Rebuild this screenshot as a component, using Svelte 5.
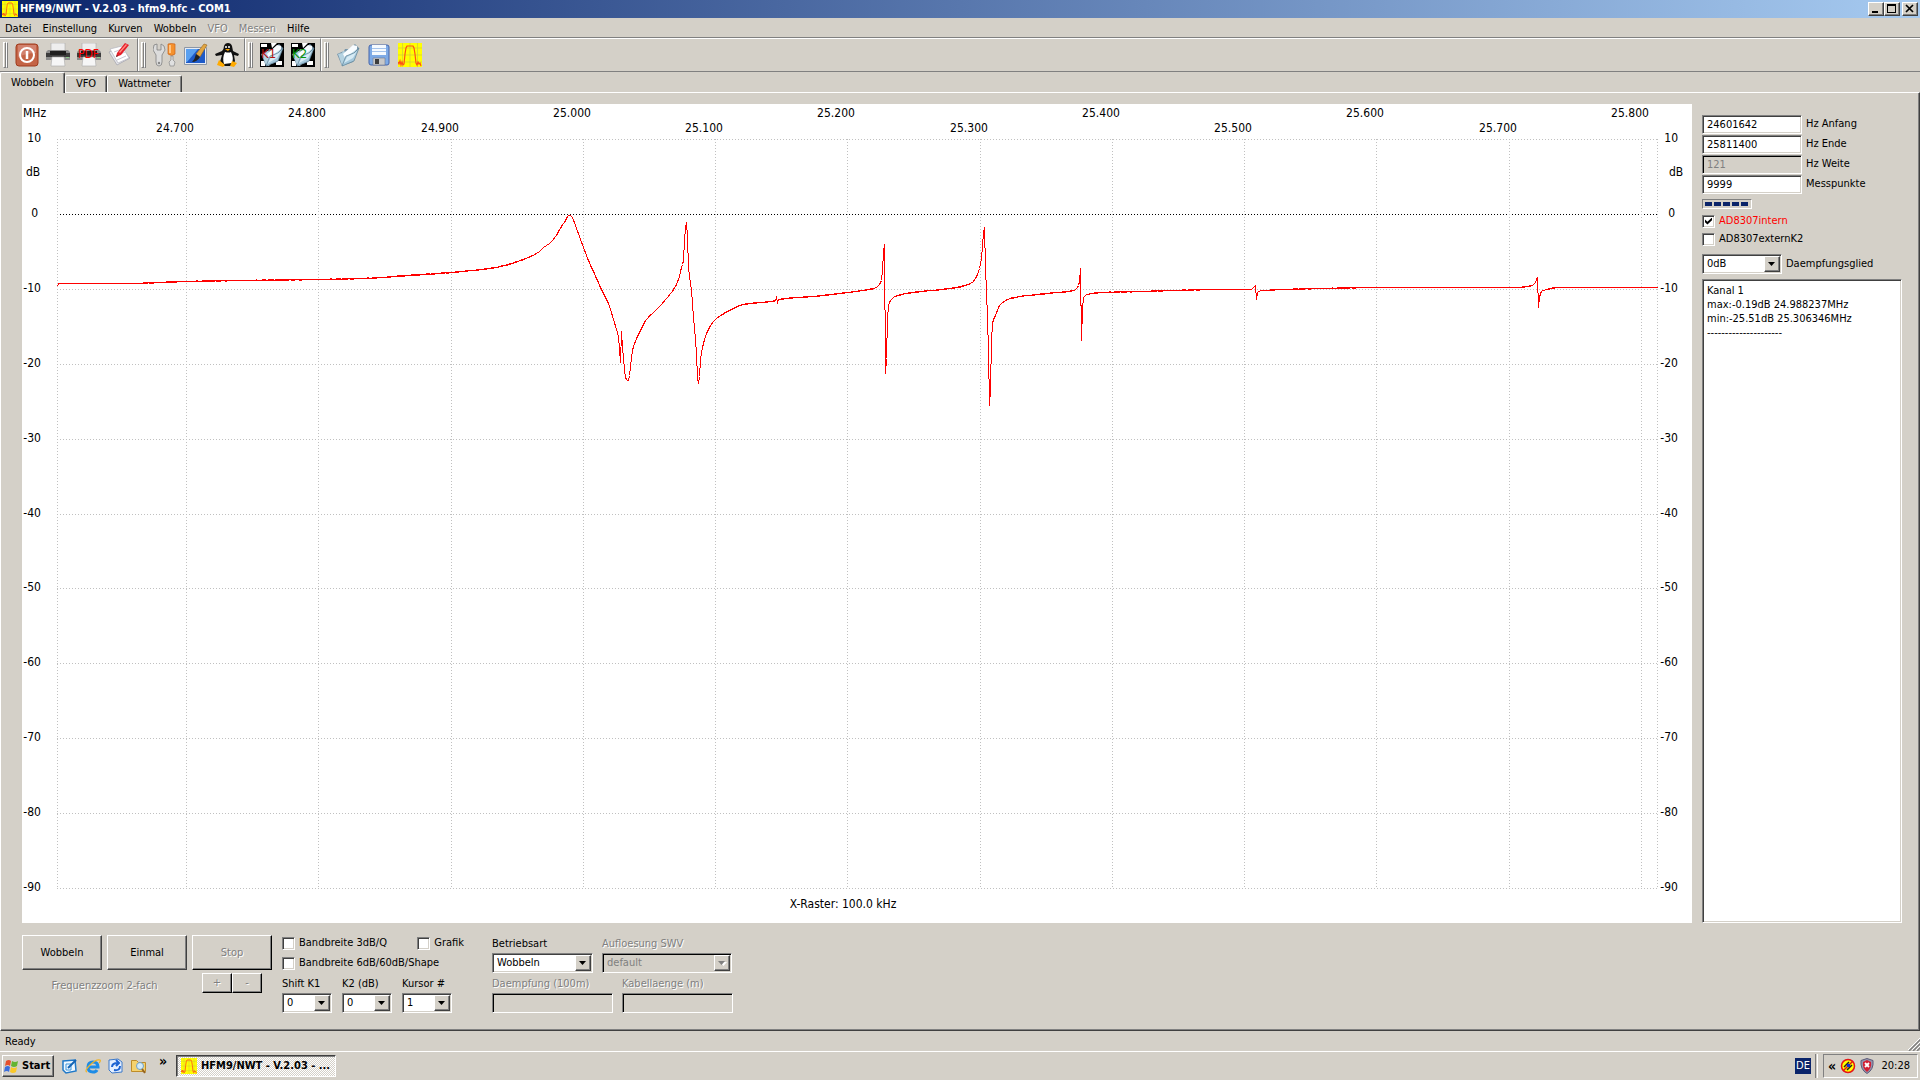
<style>
:global(body) {
  margin: 0;
  background: #d4d0c8;
}

.window {
  display: flex;
  flex-direction: column;
  min-height: 100vh;
  background: #d4d0c8;
  color: #000;
  font-family: 'DejaVu Sans Condensed', 'DejaVu Sans', sans-serif;
  font-size: 11px;
  line-height: 14px;
  cursor: default;
}

svg {
  display: block;
  flex: none;
}

button,
input,
select {
  box-sizing: border-box;
  margin: 0;
  padding: 0;
  border: 0;
  border-radius: 0;
  background: #d4d0c8;
  color: inherit;
  font: inherit;
}

/* classic edges */
.raised {
  border: 1px solid;
  border-color: #fff #404040 #404040 #fff;
  box-shadow: inset -1px -1px #808080;
}

.raised:disabled {
  border-color: #fff #000 #000 #fff;
}

.sunken {
  border: 1px solid;
  border-color: #808080 #fff #fff #808080;
  box-shadow: inset 1px 1px #404040, inset -1px -1px #d4d0c8;
  background: #fff;
}

.sunken:disabled {
  background: #d4d0c8;
  box-shadow: inset 1px 1px #000;
}

.off,
button:disabled,
input:disabled,
select:disabled {
  color: #808080;
  opacity: 1;
}

.off,
button:disabled {
  text-shadow: 1px 1px #fff;
}

/* title bar */
.title-bar {
  display: flex;
  align-items: center;
  gap: 2px;
  height: 18px;
  padding: 0 2px;
  background: linear-gradient(to right, #0a246a, #a6caf0);
  color: #fff;
}

.title-bar h1 {
  flex: 1;
  margin: 0;
  font-size: 11px;
  font-weight: 700;
}

.caption-buttons {
  display: flex;
}

.caption-buttons button {
  width: 16px;
  height: 14px;
  padding: 0 2px;
}

.caption-buttons button:last-child {
  margin-left: 2px;
}

/* menu */
.menu {
  display: flex;
  align-items: center;
  gap: 11px;
  box-sizing: border-box;
  height: 19px;
  padding: 2px 5px 0;
}

.menu a {
  color: inherit;
  text-decoration: none;
}

.menu a.off {
  color: #808080;
}

/* tool bar */
.toolbars {
  display: flex;
  box-sizing: border-box;
  height: 35px;
  border-top: 1px solid #808080;
  border-bottom: 1px solid #808080;
}

.toolbar {
  display: flex;
  align-items: center;
  gap: 7px;
  padding: 0 5px 0 2px;
  border-top: 1px solid #fff;
  border-left: 1px solid #fff;
  border-right: 1px solid #808080;
}

.toolbar:first-child {
  border-left: 0;
  padding-left: 3px;
}

.toolbar:last-child {
  flex: 1;
  border-right: 0;
}

.handle {
  display: flex;
  width: 5px;
  height: 26px;
}

.handle::before,
.handle::after {
  content: '';
  flex: 1;
  border: 1px solid;
  border-color: #fff #808080 #808080 #fff;
}

.toolbar button {
  width: 24px;
  height: 24px;
}

/* tabs */
.tabs {
  display: flex;
  align-items: flex-end;
  height: 20px;
}

.tabs button {
  height: 17px;
  padding: 0 10px;
  border: 1px solid;
  border-color: #fff #404040 transparent #fff;
  border-bottom: 0;
  border-radius: 2px 2px 0 0;
  box-shadow: inset -1px 0 #808080;
}

.tabs button.active {
  position: relative;
  height: 21px;
  margin-bottom: -1px;
  padding: 0 10px 1px;
}

.pane {
  flex: 1;
  border: 1px solid;
  border-color: #fff #404040 #404040 #fff;
  box-shadow: inset -1px -1px #808080;
  padding: 11px 17px 16px 21px;
}

.work {
  display: grid;
  grid-template-columns: minmax(0, 1fr) 200px;
  gap: 10px;
}

.chart {
  width: 100%;
  height: auto;
  background: #fff;
  font-size: 12px;
}

.grid {
  stroke: #c0c0c0;
  stroke-dasharray: 1 2;
  shape-rendering: crispEdges;
}

.zero {
  stroke: #000;
}

.trace {
  fill: none;
  stroke: #f00;
  shape-rendering: crispEdges;
}

/* side panel */
.side {
  display: flex;
  flex-direction: column;
  padding-top: 10px;
}

.field {
  display: grid;
  grid-template-columns: 100px 1fr;
  align-items: center;
  gap: 4px;
  height: 20px;
}

.field input {
  width: 100px;
  height: 19px;
  padding: 0 4px;
}

.progress {
  display: flex;
  gap: 2px;
  width: 50px;
  height: 10px;
  box-sizing: border-box;
  margin: 5px 0 3px;
  padding: 2px;
  border: 1px solid;
  border-color: #808080 #fff #fff #808080;
}

.progress i {
  width: 7px;
  background: #0a246a;
}

.check {
  display: flex;
  align-items: center;
  gap: 4px;
  height: 18px;
}

.check input {
  appearance: none;
  display: grid;
  place-items: center;
  width: 13px;
  height: 13px;
}

.check input:checked::before {
  content: '';
  width: 7px;
  height: 7px;
  background: #000;
  clip-path: polygon(0 30%, 35% 62%, 100% 0, 100% 40%, 35% 100%, 0 68%);
}

.red {
  color: #f00;
}

.combo {
  position: relative;
  display: block;
  height: 20px;
}

.combo select {
  appearance: none;
  width: 100%;
  height: 20px;
  padding: 0 4px;
}

.combo :global(svg) {
  position: absolute;
  top: 2px;
  right: 2px;
  box-sizing: border-box;
  width: 16px;
  height: 16px;
  background: #d4d0c8;
  pointer-events: none;
}

.damping {
  display: grid;
  grid-template-columns: 80px 1fr;
  align-items: center;
  gap: 4px;
  margin: 6px 0 5px;
}

.log {
  flex: 1;
  padding: 4px;
}

.log p {
  margin: 0;
}

/* controls under the chart */
.controls {
  display: flex;
  gap: 10px;
  margin-top: 12px;
}

.run {
  display: grid;
  grid-template-columns: repeat(3, 80px);
  gap: 3px 5px;
  align-content: start;
}

.run button {
  height: 35px;
}

.run .zoom-label {
  grid-column: span 2;
  align-self: end;
  text-align: center;
}

.run .zoom {
  display: flex;
  justify-content: center;
}

.run .zoom button {
  width: 30px;
  height: 20px;
}

.options {
  width: 200px;
}

.options .row {
  display: flex;
  justify-content: space-between;
  height: 20px;
  padding-right: 18px;
}

.options .row .check {
  height: 16px;
}

.shifts {
  display: flex;
  gap: 10px;
}

.shifts label {
  width: 50px;
  white-space: nowrap;
}

.stack {
  display: block;
}

.stack > span:first-child {
  display: block;
  height: 18px;
  line-height: 17px;
}

.modes {
  display: flex;
  flex-direction: column;
  gap: 2px;
}

.modes div {
  display: flex;
  gap: 9px;
}

.stack input {
  display: block;
  width: 100%;
  height: 20px;
}

.w101 {
  width: 101px;
}

.w111 {
  width: 111px;
}

.w121 {
  width: 121px;
}

.w130 {
  width: 130px;
}

/* bottom bars */
.status {
  display: flex;
  align-items: center;
  justify-content: space-between;
  box-sizing: border-box;
  height: 20px;
  padding: 2px 0 0 5px;
}

.status svg {
  align-self: flex-end;
}

.taskbar {
  display: flex;
  align-items: center;
  box-sizing: border-box;
  height: 29px;
  padding: 2px 2px 3px;
  border-top: 1px solid #fff;
}

.start,
.task {
  display: flex;
  align-items: center;
  height: 22px;
  font-weight: 700;
}

.start {
  gap: 2px;
  width: 52px;
  padding: 0 1px;
}

.quick {
  display: flex;
  align-items: center;
  gap: 7px;
  margin: 0 4px 0 8px;
}

.quick a {
  display: block;
}

.more {
  display: flex;
  align-items: flex-start;
  width: 25px;
  height: 22px;
  padding-left: 8px;
  font-size: 14px;
  font-weight: 700;
  line-height: 12px;
}

.task {
  gap: 4px;
  width: 160px;
  padding-left: 4px;
  background: repeating-conic-gradient(#fff 0 25%, #d4d0c8 0 50%) 0 0 / 2px 2px;
  border: 1px solid;
  border-color: #404040 #fff #fff #404040;
  box-shadow: inset 1px 1px #808080;
}

.lang {
  width: 16px;
  height: 16px;
  margin-left: auto;
  background: #0a246a;
  color: #fff;
  line-height: 16px;
  text-align: center;
}

.divider {
  width: 1px;
  height: 24px;
  margin: 0 5px 0 4px;
  border-left: 1px solid #808080;
  border-right: 1px solid #fff;
}

.tray {
  display: flex;
  align-items: center;
  gap: 4px;
  box-sizing: border-box;
  width: 95px;
  height: 24px;
  padding: 0 7px 0 4px;
  border: 1px solid;
  border-color: #808080 #fff #fff #808080;
}

.tray b {
  font-size: 14px;
}

.tray time {
  margin-left: auto;
}
</style>

<script>
const menu = [
  { name: 'Datei' },
  { name: 'Einstellung' },
  { name: 'Kurven' },
  { name: 'Wobbeln' },
  { name: 'VFO', off: true },
  { name: 'Messen', off: true },
  { name: 'Hilfe' },
];

const tabs = ['Wobbeln', 'VFO', 'Wattmeter'];
let tab = $state('Wobbeln');

let sweep = $state([
  { id: 'start', label: 'Hz Anfang', value: '24601642' },
  { id: 'stop', label: 'Hz Ende', value: '25811400' },
  { id: 'step', label: 'Hz Weite', value: '121', off: true },
  { id: 'points', label: 'Messpunkte', value: '9999' },
]);

const shifts = [
  { label: 'Shift K1', value: '0' },
  { label: 'K2 (dB)', value: '0' },
  { label: 'Kursor #', value: '1' },
];

// plot area inside the 1670 x 819 drawing
const left = 35;
const right = 1635;
const top = 35;
const levels = [10, 0, -10, -20, -30, -40, -50, -60, -70, -80, -90];
const levelY = (db) => top + Math.round((10 - db) * 7.49);

const freqs = Array.from({ length: 12 }, (_, i) => ({
  x: Math.round(164 + i * 132.27),
  y: i % 2 ? 13 : 28,
  text: (24.7 + i / 10).toFixed(3),
}));

const samples = [
  '35,182 36,179 101,179 164,177 218,176 295,175 340,174 385,171 429,168 458,165 478,162',
  '498,156 514,149 521,143 528,138 533,132 539,122 543,116 545,112 547,111 549,112 554,124',
  '561,143 566,156 571,167 579,185 586,199 591,215 594,225 596,233 597,244 598,258 599,227 600,243',
  '601,253 603,273 606,276 608,262 610,246 616,230 624,215 633,206 644,194 651,185 656,175',
  '659,163 661,156 662,136 664,118 665,133 666,163 669,186 671,213 674,249 675,273 676,279',
  '677,272 678,256 680,243 683,232 688,221 694,214 711,204 721,200 738,198 753,196 754,193 755,198 756,195',
  '790,192 818,189 834,187 851,184 856,181 859,176 860,166 861,148 862,140 863,269 864,254',
  '865,214 866,201 869,195 873,192 884,189 918,185 934,183 948,179 953,174 957,164 959,154',
  '960,142 961,128 962,123 963,162 964,188 965,213 966,247 967,301 968,285 969,236 970,219',
  '973,211 978,200 988,194 1005,191 1025,189 1051,186 1055,183 1057,177 1058,164 1059,236',
  '1060,204 1061,193 1065,190 1081,188 1118,187 1150,186 1200,185 1228,185 1231,183 1233,181',
  '1234,195 1235,188 1240,186 1300,184 1360,183 1490,183 1510,181 1513,178 1515,173 1516,203',
  '1517,193 1519,187 1525,185 1535,183 1635,183',
]
  .join(' ')
  .split(' ')
  .map((p) => p.split(',').map(Number));

// monotone curve through the samples, with a little receiver noise
function sweepLine(pts) {
  const d = pts.slice(1).map(([x, y], i) => (y - pts[i][1]) / (x - pts[i][0]));
  const m = pts.map((_, i) => {
    const a = d[i - 1] ?? 0;
    const b = d[i] ?? 0;
    return a * b > 0 ? (2 * a * b) / (a + b) : 0;
  });
  const out = [];
  for (let i = 0; i < pts.length - 1; i++) {
    const [x0, y0] = pts[i];
    const w = pts[i + 1][0] - x0;
    for (let s = 0; s < w; s++) {
      const t = s / w;
      const u = 1 - t;
      const y =
        y0 * u * u * (1 + 2 * t) +
        pts[i + 1][1] * t * t * (3 - 2 * t) +
        w * t * u * (m[i] * u - m[i + 1] * t);
      const noise = w > 8 ? Math.sin((x0 + s) * 12.9898) * 0.3 : 0;
      out.push(`${x0 + s},${Math.round(y + noise)}`);
      if (w > 8) out.push(`${x0 + s},${Math.round(y - noise)}`);
    }
  }
  out.push(pts.at(-1).join());
  return out.join(' ');
}

const trace = sweepLine(samples);
</script>

{#snippet curve(size)}
  <svg width={size} height={size} viewBox="0 0 24 24">
    <path fill="#ff0" d="M0 0h24v24H0z" />
    <path stroke="#d2c83c" stroke-width=".7" d="M4.500 0v24M12 0v24M19.500 0v24M0 5h24M0 12h24M0 19h24" />
    <path
      fill="none"
      stroke="#ff5014"
      stroke-width="1.200"
      d="M0 19l1 2 1-3 1 4 1-3 1 3 1-1 1-10 1-6 1-2h6l1 2 1 6 1 9 1 2 1-3 1 2 1-1 1 3"
    />
  </svg>
{/snippet}

{#snippet folder()}
  <path fill="#7896aa" d="M1 11l7-3 1-2 4 0 6-5 4 4-6 14-11 4z" />
  <path fill="#b4d2e1" d="M2 11l4-1 1-2 4 1 8-6 2 3-12 17-3-1z" />
  <path fill="#f8fcff" d="M7 11l10-9 4 1 0 3-12 9z" />
  <path fill="#a5c8dc" stroke="#5f8296" stroke-width=".7" d="M6 23l4-10 8-3 5-5-5 13z" />
  <path fill="#d7ebf5" d="M8 20l3-6 8-4 2-2-4 7z" />
{/snippet}

{#snippet printer()}
  <path fill="#eee" stroke="#aaa" stroke-width=".6" d="M5 0h14v9H5z" />
  <path fill="#8c8c8c" d="M0 9l2-2h20l2 2v8H0z" />
  <path fill="#3c3c3c" d="M0 10h24v4H0z" />
  <path fill="#1e1e1e" d="M4 8h16v4H4z" />
  <path fill="#f6f6f6" stroke="#aaa" stroke-width=".6" d="M6 14h12l1 9H5z" />
  <path fill="#8c8" d="M20 14h3v1h-3z" />
{/snippet}

{#snippet drop(off)}
  <svg class="raised" viewBox="0 0 14 14">
    {#if off}<path fill="#fff" d="M5 6h7l-3.500 4z" />{/if}
    <path fill={off ? '#808080' : '#000'} d="M3 5h7L6.500 9z" />
  </svg>
{/snippet}

<div class="window">
  <header class="title-bar">
    {@render curve(16)}
    <h1>HFM9/NWT - V.2.03 - hfm9.hfc - COM1</h1>
    <div class="caption-buttons">
      <button class="raised" aria-label="Minimieren">
        <svg width="10" height="10"><path d="M1 7h6v2H1z" /></svg>
      </button>
      <button class="raised" aria-label="Maximieren">
        <svg width="10" height="10"><path fill-rule="evenodd" d="M0 0h9v9H0zM1 2v6h7V2z" /></svg>
      </button>
      <button class="raised" aria-label="Schließen">
        <svg width="10" height="10"><path stroke="#000" stroke-width="1.700" d="M1 1l7 7M8 1L1 8" /></svg>
      </button>
    </div>
  </header>

  <nav class="menu">
    {#each menu as item}
      <a href="#{item.name}" class:off={item.off}>{item.name}</a>
    {/each}
  </nav>

  <div class="toolbars">
    <div class="toolbar">
      <span class="handle"></span>
      <button aria-label="Beenden">
        <svg width="24" height="24">
          <rect x="1" y="1" width="22" height="22" rx="3" fill="#c46446" stroke="#a03c1e" />
          <path fill="#d2826e" d="M3 2h18v8q-9 0-18 4z" />
          <circle cx="12" cy="12" r="7" fill="none" stroke="#fff" stroke-width="2" />
          <path stroke="#fff" stroke-width="2.500" d="M12 8v8" />
        </svg>
      </button>
      <button aria-label="Drucken">
        <svg width="24" height="24">{@render printer()}</svg>
      </button>
      <button aria-label="PDF drucken">
        <svg width="24" height="24">
          {@render printer()}
          <text x="1" y="15" font-size="12" fill="#f00">PDF</text>
        </svg>
      </button>
      <button aria-label="Kurve bearbeiten">
        <svg width="24" height="24">
          <path fill="#e6e6eb" stroke="#a0a0aa" stroke-width=".7" d="M1 9l11-5 10 11-13 7z" />
          <path fill="#fff" stroke="#b4b4be" stroke-width=".7" d="M2 6l12-3 7 12-11 5z" />
          <path stroke="#c8c8d2" d="M6 9l8-3M8 13l9-4M9 17l9-4" />
          <path fill="#e61e28" d="M8 14l1-4 8-10 4 2-8 10z" />
          <path fill="#ff8c82" d="M11 9l7-8 1 1-7 8z" />
          <path fill="#333" d="M8 14l1-2 1 1z" />
        </svg>
      </button>
    </div>
    <div class="toolbar">
      <span class="handle"></span>
      <button aria-label="Optionen">
        <svg width="24" height="24">
          <path
            fill="#dcdcdc"
            stroke="#828282"
            stroke-width=".8"
            d="M1 2l3-1v6h4V1l3 2 1 4-3 5v7q0 4-3 4t-3-4v-7L0 7z"
          />
          <circle cx="6" cy="20" r="1.200" fill="#888" />
          <path fill="#f5912d" stroke="#c8641e" stroke-width=".7" d="M15 1q3-1 7 0v10q-3 3-7 0z" />
          <path fill="#ffc382" d="M16 2h2v8h-2z" />
          <path fill="#e0e0e0" stroke="#888" stroke-width=".7" d="M18 13h2v4l2 2-1 4h-4l-1-4 2-2z" />
        </svg>
      </button>
      <button aria-label="Farben">
        <svg width="24" height="24">
          <path fill="#e6ebf5" stroke="#8c96a5" d="M.5 4.500h22v17H.5z" />
          <path fill="#1e5ac8" d="M2 6h19v14H2z" />
          <path fill="#5aa0f0" d="M2 6h12L3 19H2z" />
          <path fill="#e1a541" stroke="#96641e" stroke-width=".6" d="M12 11l8-10 3 1-7 12z" />
          <path fill="#222" d="M12 11l4 3q-3 5-8 5 3-3 4-8z" />
        </svg>
      </button>
      <button aria-label="Linux">
        <svg width="24" height="24">
          <path fill="#111" d="M9 3q1-3 4-3t4 3l1 5 6 3-1 2-4-1 1 6-3 5H9l-4-4 2-7-6 1-1-2 7-3q2-2 2-5z" />
          <path fill="#fff" d="M10 9q4 1 6 0 3 6 1 11l-8 1q-2-6 1-12z" />
          <circle cx="11" cy="4" r="1" fill="#fff" />
          <circle cx="14" cy="4" r="1" fill="#fff" />
          <path fill="#fa0" d="M10 6h5l-2 2zM4 17l6 5-2 2-6-2zM17 18l5 2-3 4-4-1z" />
        </svg>
      </button>
    </div>
    <div class="toolbar">
      <span class="handle"></span>
      {#each [['K1', '#b41414'], ['K2', '#0a960a']] as [name, color]}
        <button aria-label="Kanal {name}">
          <svg width="24" height="24">
            <path d="M0 0h24v24H0z" />
            <path fill="#fff" d="M1 1h6v3H1zM16 18h6v4h-6zM1 18h4v5H1zM11 0h6l-5 5z" />
            {@render folder()}
            <text x="1" y="15" font-size="13" fill={color}>{name}</text>
          </svg>
        </button>
      {/each}
    </div>
    <div class="toolbar">
      <span class="handle"></span>
      <button aria-label="Öffnen">
        <svg width="24" height="24">{@render folder()}</svg>
      </button>
      <button aria-label="Speichern">
        <svg width="24" height="24">
          <rect x="2" y="2" width="20" height="20" rx="2" fill="#7daae6" stroke="#4664aa" />
          <path fill="#f5faff" d="M5 2h14v10H5z" />
          <path fill="#a5c3eb" d="M5 5h14v1H5zM5 8h14v1H5z" />
          <path fill="#c8c8c8" stroke="#6e7891" stroke-width=".6" d="M6 15h12v7H6z" />
          <path fill="#3c3c3c" d="M8 16h4v5H8z" />
        </svg>
      </button>
      <button aria-label="Wobbeln">{@render curve(24)}</button>
    </div>
  </div>

  <div class="tabs">
    {#each tabs as name}
      <button class:active={tab === name} onclick={() => (tab = name)}>{name}</button>
    {/each}
  </div>

  <main class="pane">
    <div class="work">
      <svg class="chart" viewBox="0 0 1670 819">
        <g class="grid">
          {#each levels as db}
            <line x1={left} x2={right} y1={levelY(db) + 0.5} y2={levelY(db) + 0.5} class:zero={db === 0} />
          {/each}
          {#each [left, ...freqs.map((f) => f.x), right] as x}
            <line x1={x + 0.5} x2={x + 0.5} y1={top} y2={top + 750} />
          {/each}
        </g>
        <text x="1" y="13">MHz</text>
        {#each freqs as f}
          <text x={f.x - 11} y={f.y} text-anchor="middle">{f.text}</text>
        {/each}
        {#each levels as db}
          <text x={db ? 19 : 16} y={levelY(db) + 3} text-anchor="end">{db}</text>
          <text x={db ? 1656 : 1653} y={levelY(db) + 3} text-anchor="end">{db}</text>
        {/each}
        <text x="4" y="72">dB</text>
        <text x="1647" y="72">dB</text>
        <text x="821" y="804" text-anchor="middle">X-Raster: 100.0 kHz</text>
        <polyline class="trace" points={trace} transform="translate(.5 .5)" />
      </svg>

      <aside class="side">
        {#each sweep as field}
          <div class="field">
            <input id={field.id} class="sunken" bind:value={field.value} disabled={field.off} />
            <label for={field.id}>{field.label}</label>
          </div>
        {/each}
        <div class="progress"><i></i><i></i><i></i><i></i><i></i></div>
        <label class="check red"><input class="sunken" type="checkbox" checked />AD8307intern</label>
        <label class="check"><input class="sunken" type="checkbox" />AD8307externK2</label>
        <div class="damping">
          <span class="combo">
            <select id="damping" class="sunken"><option>0dB</option></select>
            {@render drop(false)}
          </span>
          <label for="damping">Daempfungsglied</label>
        </div>
        <div class="log sunken">
          <p>Kanal 1</p>
          <p>max:-0.19dB 24.988237MHz</p>
          <p>min:-25.51dB 25.306346MHz</p>
          <p>---------------------</p>
        </div>
      </aside>
    </div>

    <div class="controls">
      <div class="run">
        <button class="raised">Wobbeln</button>
        <button class="raised">Einmal</button>
        <button class="raised" disabled>Stop</button>
        <span class="zoom-label off">Frequenzzoom 2-fach</span>
        <div class="zoom">
          <button class="raised" disabled>+</button>
          <button class="raised" disabled>-</button>
        </div>
      </div>

      <div class="options">
        <div class="row">
          <label class="check"><input class="sunken" type="checkbox" />Bandbreite 3dB/Q</label>
          <label class="check"><input class="sunken" type="checkbox" />Grafik</label>
        </div>
        <div class="row">
          <label class="check"><input class="sunken" type="checkbox" />Bandbreite 6dB/60dB/Shape</label>
        </div>
        <div class="shifts">
          {#each shifts as s}
            <label class="stack">
              <span>{s.label}</span>
              <span class="combo">
                <select class="sunken"><option>{s.value}</option></select>
                {@render drop(false)}
              </span>
            </label>
          {/each}
        </div>
      </div>

      <div class="modes">
        <div>
          <label class="stack w101">
            <span>Betriebsart</span>
            <span class="combo">
              <select class="sunken"><option>Wobbeln</option></select>
              {@render drop(false)}
            </span>
          </label>
          <label class="stack w130">
            <span class="off">Aufloesung SWV</span>
            <span class="combo">
              <select class="sunken" disabled><option>default</option></select>
              {@render drop(true)}
            </span>
          </label>
        </div>
        <div>
          <label class="stack w121">
            <span class="off">Daempfung (100m)</span>
            <input class="sunken" disabled />
          </label>
          <label class="stack w111">
            <span class="off">Kabellaenge (m)</span>
            <input class="sunken" disabled />
          </label>
        </div>
      </div>
    </div>
  </main>

  <footer class="status">
    <span>Ready</span>
    <svg width="12" height="13">
      <path stroke="#fff" d="M0 12L12 0M4 12l8-8M8 12l4-4" />
      <path stroke="#808080" stroke-width="1.500" d="M1 13L13 1M5 13l8-8M9 13l4-4" />
    </svg>
  </footer>

  <div class="taskbar">
    <button class="start raised">
      <svg width="16" height="16">
        <path fill="#e6502d" d="M2 3q3-2 5 0L6 8Q4 6 1 8z" />
        <path fill="#64b432" d="M8 3q3 2 6 0l-1 5q-3 2-6 0z" />
        <path fill="#3c6edc" d="M1 9q3-2 5 0l-1 5q-2-2-5 0z" />
        <path fill="#fac828" d="M7 9q3 2 6 0l-1 5q-3 2-6 0z" />
      </svg>
      Start
    </button>
    <div class="quick">
      <a href="#desktop" aria-label="Desktop">
        <svg width="16" height="16">
          <path fill="#f0f8ff" stroke="#1e78c8" stroke-width="1.500" d="M1 3l12-1 1 11-10 2-3-3z" />
          <path fill="none" stroke="#3c96dc" d="M4 6h5v6H4z" />
          <path stroke="#1464b4" stroke-width="2" d="M6 10l8-8" />
        </svg>
      </a>
      <a href="#internet" aria-label="Internet Explorer">
        <svg width="16" height="16">
          <path fill="none" stroke="#1e8ce6" stroke-width="3" d="M3 9h10q0-5-5-5T3 9t5 5q3 0 4-2" />
          <path fill="none" stroke="#f0b428" stroke-width="1.200" d="M2 14q-3-1 3-7t10-5q1 1-1 3" />
        </svg>
      </a>
      <a href="#mail" aria-label="Outlook Express">
        <svg width="16" height="16">
          <path fill="#e6f0ff" stroke="#3c78c8" d="M1 2l9-1 4 3v10l-10 1-3-3z" />
          <path fill="none" stroke="#1e64d2" stroke-width="2" d="M4 9q0-4 6-4M8 2l3 3-3 3M12 8q0 5-6 4" />
        </svg>
      </a>
      <a href="#explorer" aria-label="Explorer">
        <svg width="16" height="16">
          <path fill="#f5d26e" stroke="#be8c28" d="M.5 2.500h5l2 2h7v9H.5z" />
          <circle cx="9" cy="8" r="3.500" fill="#d2ebfa" stroke="#6ea0c8" />
          <path stroke="#966420" stroke-width="2" d="M11 11l3 4" />
        </svg>
      </a>
    </div>
    <button class="more">»</button>
    <button class="task">{@render curve(16)}HFM9/NWT - V.2.03 - ...</button>

    <span class="lang">DE</span>
    <span class="divider"></span>
    <div class="tray">
      <b>«</b>
      <svg width="16" height="16">
        <circle cx="8" cy="8" r="6.500" fill="#ff0" stroke="#e61414" stroke-width="1.500" />
        <path stroke="#222" stroke-width="1.500" d="M4 9l5-5M7 12l5-5" />
        <path stroke="#e61414" stroke-width="1.500" d="M3 13L13 3" />
        <path fill="#1428dc" d="M7 6h3v3H7z" />
      </svg>
      <svg width="14" height="16">
        <path fill="#9696af" stroke="#5a5a78" d="M7 .5l6 2q1 9-6 13Q0 11.500 1 2.500z" />
        <path fill="#d21e32" d="M7 2l4 2q1 6-4 10Q2 10 3 4z" />
        <path stroke="#fff" stroke-width="1.800" d="M5 5l4 4M9 5L5 9" />
      </svg>
      <time>20:28</time>
    </div>
  </div>
</div>
